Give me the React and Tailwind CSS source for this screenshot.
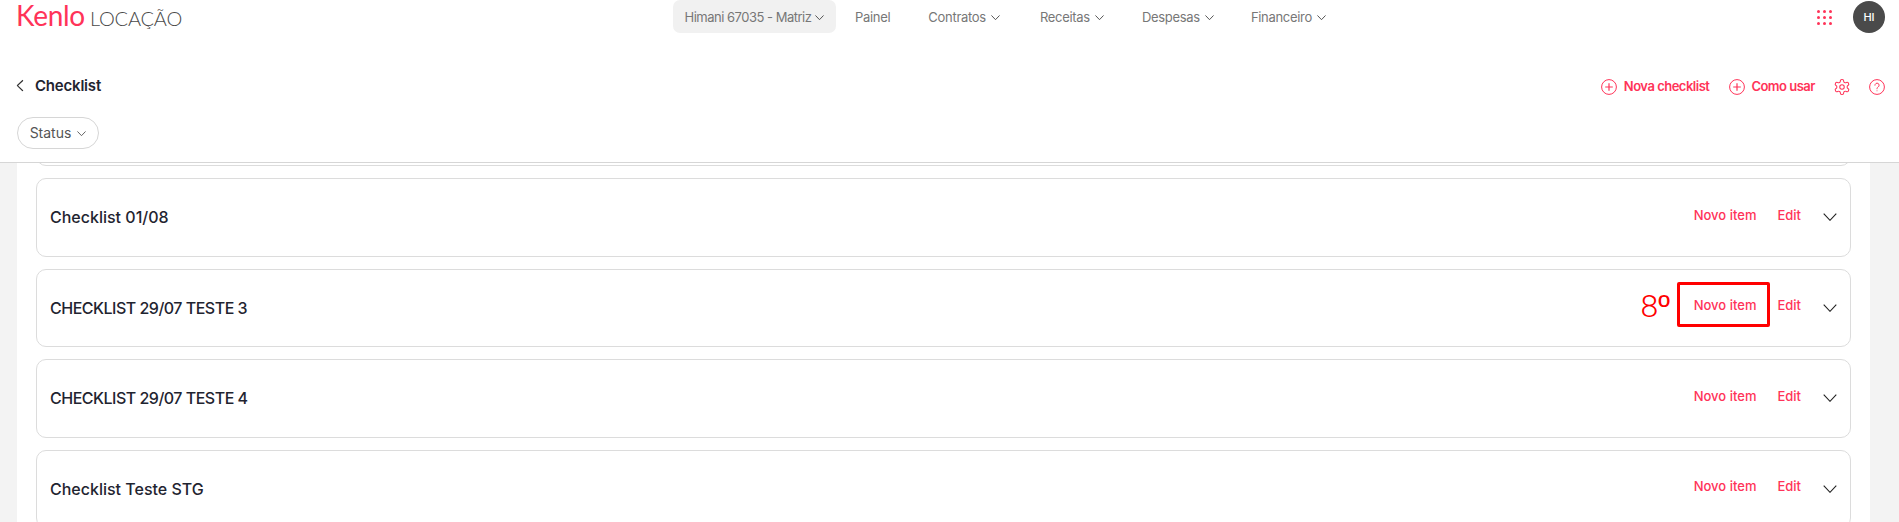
import React from "react";

const Chevron = ({ className = "", w = 9, sw = 1 }) => (
  <svg className={className} width={w} height={w * 0.6} viewBox="0 0 10 6" fill="none" stroke="currentColor" strokeWidth={sw}>
    <path d="M0.5 0.5 5 5.2 9.5 0.5" />
  </svg>
);

const PlusCircle = () => (
  <svg width="16" height="16" viewBox="0 0 16 16" fill="none" stroke="#ff3358" strokeWidth="1">
    <circle cx="8" cy="8" r="7.4" />
    <path d="M8 4.2v7.6M4.2 8h7.6" strokeWidth="1.2" />
  </svg>
);

const Gear = () => (
  <svg width="18" height="18" viewBox="0 0 24 24" fill="none" stroke="#ff3358" strokeWidth="1.4" strokeLinecap="round" strokeLinejoin="round">
    <path d="M12.22 2h-.44a2 2 0 0 0-2 2v.18a2 2 0 0 1-1 1.73l-.43.25a2 2 0 0 1-2 0l-.15-.08a2 2 0 0 0-2.73.73l-.22.38a2 2 0 0 0 .73 2.73l.15.1a2 2 0 0 1 1 1.72v.51a2 2 0 0 1-1 1.74l-.15.09a2 2 0 0 0-.73 2.73l.22.38a2 2 0 0 0 2.73.73l.15-.08a2 2 0 0 1 2 0l.43.25a2 2 0 0 1 1 1.73V20a2 2 0 0 0 2 2h.44a2 2 0 0 0 2-2v-.18a2 2 0 0 1 1-1.73l.43-.25a2 2 0 0 1 2 0l.15.08a2 2 0 0 0 2.73-.73l.22-.39a2 2 0 0 0-.73-2.73l-.15-.08a2 2 0 0 1-1-1.74v-.5a2 2 0 0 1 1-1.74l.15-.09a2 2 0 0 0 .73-2.73l-.22-.38a2 2 0 0 0-2.73-.73l-.15.08a2 2 0 0 1-2 0l-.43-.25a2 2 0 0 1-1-1.73V4a2 2 0 0 0-2-2z" />
    <circle cx="12" cy="12" r="3" />
  </svg>
);

const Help = () => (
  <svg width="16" height="16" viewBox="0 0 16 16" fill="none" stroke="#ff3358" strokeWidth="1">
    <circle cx="8" cy="8" r="7.4" />
    <path d="M5.9 6.2a2.1 2.1 0 1 1 3.2 1.8c-.7.4-1.1.9-1.1 1.8" strokeLinecap="round" />
    <circle cx="8" cy="11.8" r="0.5" fill="#ff3358" stroke="none" />
  </svg>
);

const Dots = () => (
  <svg width="15" height="15" viewBox="0 0 15 15" fill="#ff3358">
    {[1.5, 7.5, 13.5].flatMap((y) =>
      [1.5, 7.5, 13.5].map((x) => <circle key={`${x}-${y}`} cx={x} cy={y} r="1.5" />)
    )}
  </svg>
);

const navItems = [
  { label: "Contratos", cls: "ml-[38px]" },
  { label: "Receitas", cls: "ml-[40px]" },
  { label: "Despesas", cls: "ml-[38px]" },
  { label: "Financeiro", cls: "ml-[37px]" },
];

const Card = ({ title, caps, bare, children }) => (
  <div className="relative h-[78.5px] shrink-0 rounded-[10px] border border-[#dcdcdc] bg-white flex items-center justify-between pl-[13px] pr-[13px]">
    <span className={`text-[16px] font-medium text-[#1f2430] ${caps ? "tracking-[-0.5px]" : ""}`}>{title}</span>
    {!bare && (
      <div className="flex items-center text-[13px] font-medium text-[#ff3358]">
        {children}
        <span className="-mt-[4px]">Novo item</span>
        <span className="ml-[21px] -mt-[4px]">Edit</span>
        <Chevron w={14} sw={0.8} className="ml-[22px] text-[#222]" />
      </div>
    )}
  </div>
);

export default function App() {
  return (
    <div className="h-[522px] w-[1899px] overflow-hidden flex flex-col bg-white font-['Inter',sans-serif]">
      <header className="h-[163px] shrink-0 border-b border-[#d6d6d6] bg-white flex flex-col">
        <div className="relative h-[34px] flex items-start justify-between pl-[16px] pr-[14px]">
          <div className="flex items-baseline whitespace-nowrap font-['Lato',sans-serif]">
            <span className="text-[28px] leading-[30px] tracking-[-0.3px] font-normal text-[#ff3358]">Kenlo</span>
            <span className="ml-[5px] text-[20px] leading-[30px] tracking-[-0.2px] font-light text-[#4a4a4a]">LOCAÇÃO</span>
          </div>
          <nav className="absolute left-[673px] top-0 h-[33px] flex items-center text-[13px] tracking-[-0.3px] text-[#777]">
            <div className="h-[33px] w-[163px] rounded-[7px] bg-[#f1f1f1] flex items-center justify-center gap-[4px] pt-[2px]">
              <span className="tracking-[-0.5px]">Himani 67035 - Matriz</span> <Chevron className="text-[#444]" />
            </div>
            <span className="ml-[19px] pt-[2px]">Painel</span>
            {navItems.map((n) => (
              <div key={n.label} className={`${n.cls} flex items-center gap-[5px] pt-[2px]`}>
                {n.label} <Chevron className="text-[#444]" />
              </div>
            ))}
          </nav>
          <div className="ml-auto mt-px flex items-center">
            <Dots />
            <div className="ml-[21px] h-[32px] w-[32px] rounded-full bg-[#4a4a4a] flex items-center justify-center text-[11px] font-medium text-white">HI</div>
          </div>
        </div>
        <div className="mt-[44px] h-[18px] flex items-center pl-[17px] pr-[14px]">
          <Chevron w={12} className="-ml-[3px] -mt-[2px] rotate-90 text-[#333]" />
          <span className="ml-[9px] -mt-px text-[15px] font-semibold tracking-[-0.2px] text-[#1f2430]">Checklist</span>
          <div className="ml-auto flex items-center text-[13px] font-semibold tracking-[-0.5px] text-[#ff3358]">
            <PlusCircle />
            <span className="ml-[7px] -mt-px">Nova checklist</span>
            <span className="ml-[20px]"><PlusCircle /></span>
            <span className="ml-[6px] -mt-px">Como usar</span>
            <span className="ml-[18px]"><Gear /></span>
            <span className="ml-[18px]"><Help /></span>
          </div>
        </div>
        <div className="mt-[21px] pl-[17px]">
          <button className="h-[32px] w-[82px] rounded-full border border-[#d6d6d6] flex items-center justify-center gap-[6px] text-[14px] text-[#555]">
            <span className="-mt-px">Status</span> <Chevron className="mt-px" />
          </button>
        </div>
      </header>
      <main className="flex-1 overflow-hidden bg-[#f3f3f3] pl-[17px] pr-[3px]">
        <div className="h-full w-[1853px] bg-white overflow-hidden px-[19px]">
          <div className="flex flex-col gap-[12px] -mt-[75.5px]">
            <Card bare />
            <Card title="Checklist 01/08" />
            <Card title="CHECKLIST 29/07 TESTE 3" caps>
              <span className="absolute right-[180px] top-[14px] text-[32px] leading-[44px] font-light text-[#ff0000] font-['Roboto',sans-serif]">8<span className="font-normal font-['Liberation_Sans',sans-serif]">º</span></span>
              <span className="absolute left-[1640px] top-[12px] h-[45px] w-[93px] rounded-[2px] border-[3px] border-[#ff0000]" />
            </Card>
            <Card title="CHECKLIST 29/07 TESTE 4" caps />
            <Card title="Checklist Teste STG" />
          </div>
        </div>
      </main>
    </div>
  );
}
